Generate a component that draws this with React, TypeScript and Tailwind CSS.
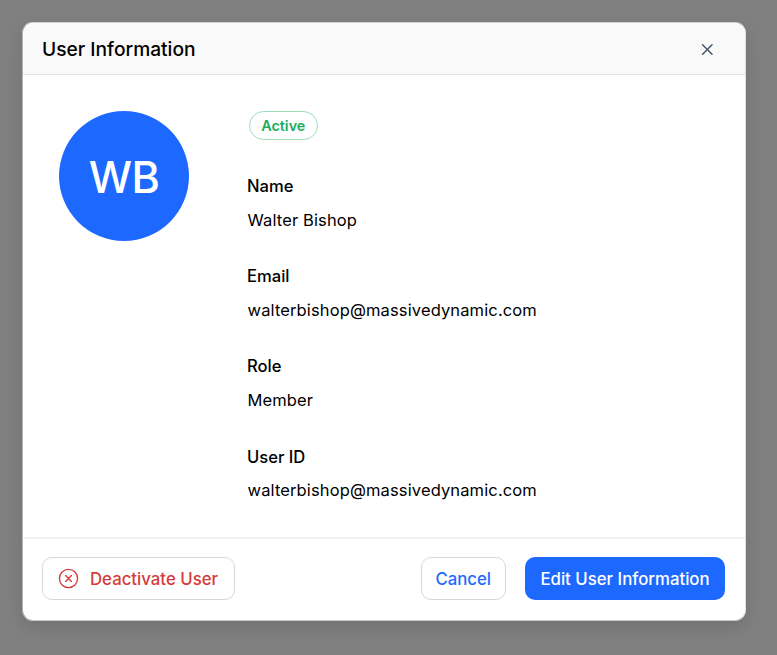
import React from "react";

const fields = [
  { label: "Name", value: "Walter Bishop" },
  { label: "Email", value: "walterbishop@massivedynamic.com" },
  { label: "Role", value: "Member" },
  { label: "User ID", value: "walterbishop@massivedynamic.com" },
];

export default function App() {
  return (
    <div className="h-[655px] w-[777px] overflow-hidden bg-[#808080] pt-[22px] pl-[22px] font-['Inter',sans-serif] text-black">
      <section className="flex h-[599px] w-[724px] flex-col overflow-hidden rounded-[11px] border border-t-[#d4d4d4] border-r-[#dfe0e5] border-b-[#c6cacf] border-l-[#b5b5b8] bg-white shadow-[0_6px_18px_rgba(0,0,0,0.12)]">
        <header className="flex h-[52px] shrink-0 items-center justify-between border-b border-[#e2e3e7] bg-[#f9f9f9] pt-px pr-[32px] pl-[19px]">
          <h1 className="text-[19.2px] leading-[28px] font-medium">User Information</h1>
          <button aria-label="Close">
            <svg width="12" height="12" viewBox="0 0 12 12" stroke="#475569" strokeWidth="1.5" strokeLinecap="round">
              <path d="M1.6 1.8l9.4 9.4M11 1.8l-9.4 9.4" />
            </svg>
          </button>
        </header>
        <main className="flex grow pt-[36px] pl-[36px]">
          <div className="flex size-[130px] shrink-0 items-center justify-center rounded-full bg-[#1d69ff] pt-[2px] text-[43.2px] font-medium tracking-[-0.6px] text-white">WB</div>
          <div className="ml-[58px]">
            <span className="ml-[2px] flex h-[29px] w-[68.5px] items-center justify-center rounded-full border border-[#9cdcb9] text-[14.4px] font-semibold text-[#1cab5c]">Active</span>
            <dl className="mt-[34px]">
              {fields.map((field) => (
                <div key={field.label} className="h-[90.2px]">
                  <dt className="text-[16.6px] leading-[24px] font-medium">{field.label}</dt>
                  <dd className="mt-[9.7px] ml-[0.5px] text-[16.5px] leading-[24px] tracking-[0.13px]">{field.value}</dd>
                </div>
              ))}
            </dl>
          </div>
        </main>
        <footer className="flex h-[83px] shrink-0 items-start border-t-2 border-[#f1f2f3] pt-[18px] pr-[20px] pl-[19px] text-[16.8px] leading-[25px] font-medium">
          <button className="flex h-[43px] w-[192.5px] items-center rounded-[10px] border border-[#d8d8d9] pl-[15px] pt-px text-[#d63c3c]">
            <svg className="mr-[11px] mb-px" width="21" height="21" viewBox="0 0 21 21" fill="none" stroke="currentColor" strokeWidth="1.35" strokeLinecap="round">
              <circle cx="10.5" cy="10.5" r="9.1" />
              <path d="M7.6 7.6l5.8 5.8M13.4 7.6l-5.8 5.8" />
            </svg>
            Deactivate User
          </button>
          <button className="ml-auto h-[43px] w-[85.5px] rounded-[10px] border border-[#d8d8d9] pt-px text-[#1d69ff]">Cancel</button>
          <button className="ml-[19px] h-[43px] w-[200px] rounded-[10px] bg-[#1d69ff] pt-px text-white">Edit User Information</button>
        </footer>
      </section>
    </div>
  );
}
